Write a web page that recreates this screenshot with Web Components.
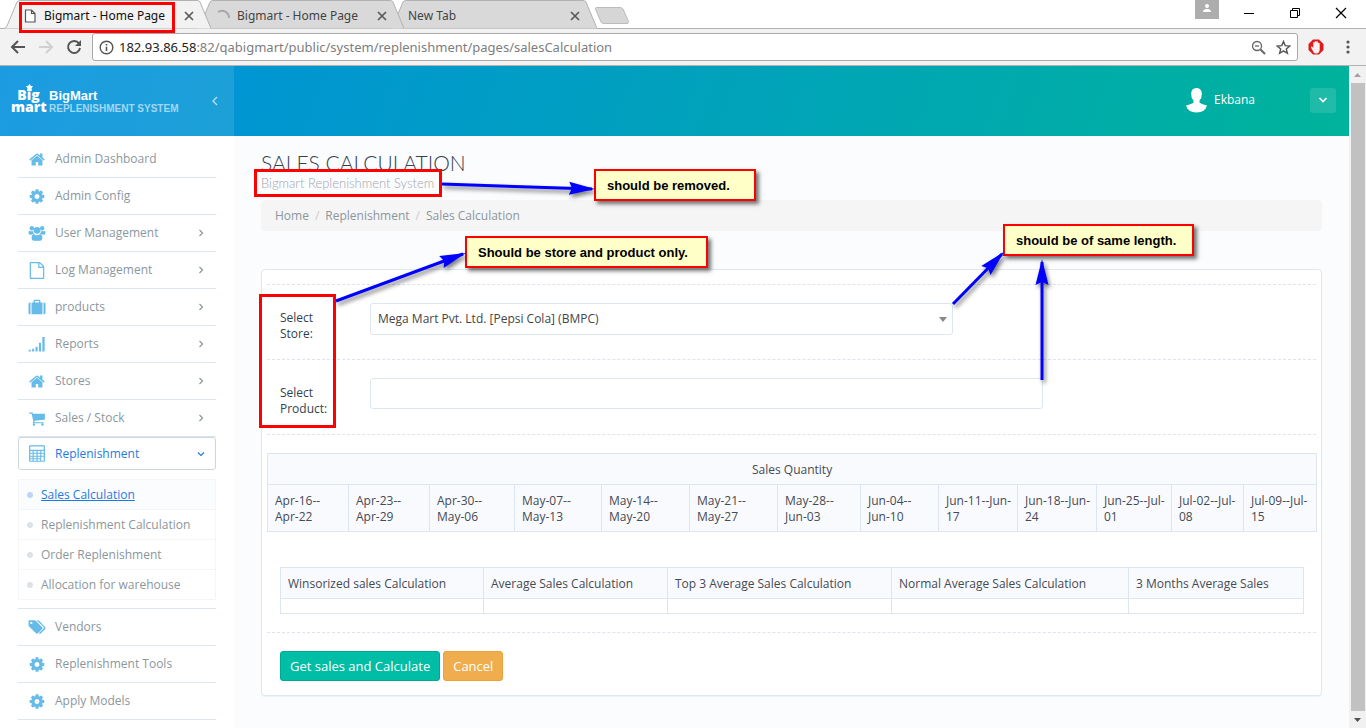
<!DOCTYPE html>
<html lang="en">
<head>
<meta charset="utf-8">
<title>Bigmart - Home Page</title>
<style>
  html, body { margin: 0; height: 100%; }
  body { font: 12px/16px "Open Sans", sans-serif; color: #333f4f; background: #fbfcfe; overflow: hidden; }
</style>
</head>
<body>
<app-window></app-window>
<script>
const ICONS = {
  home: '<path d="M1472 992v480q0 26-19 45t-45 19h-384v-384h-256v384h-384q-26 0-45-19t-19-45v-480q0-1 .5-3t.5-3l575-474 575 474q1 2 1 6zm223-69l-62 74q-8 9-21 11h-3q-13 0-21-7l-692-577-692 577q-12 8-24 7-13-2-21-11l-62-74q-8-10-7-23.5t11-21.5l719-599q32-26 76-26t76 26l244 204v-195q0-14 9-23t23-9h192q14 0 23 9t9 23v408l219 182q10 8 11 21.5t-7 23.5z"/>',
  cog: '<path d="M1152 896q0-106-75-181t-181-75-181 75-75 181 75 181 181 75 181-75 75-181zm512-109v222q0 12-8 23t-20 13l-185 28q-19 54-39 91 35 50 107 138 10 12 10 25t-9 23q-27 37-99 108t-94 71q-12 0-26-9l-138-108q-44 23-91 38-16 136-29 186-7 28-36 28h-222q-14 0-24.5-8.5t-11.5-21.5l-28-184q-49-16-90-37l-141 107q-10 9-25 9-14 0-25-11-126-114-165-168-7-10-7-23 0-12 8-23 15-21 51-66.5t54-70.5q-27-50-41-99l-183-27q-13-2-21-12.5t-8-23.5v-222q0-12 8-23t19-13l186-28q14-46 39-92-40-57-107-138-10-12-10-24 0-10 9-23 26-36 98.5-107.5t94.5-71.5q13 0 26 10l138 107q44-23 91-38 16-136 29-186 7-28 36-28h222q14 0 24.5 8.5t11.5 21.5l28 184q49 16 90 37l142-107q9-9 24-9 13 0 25 10 129 119 165 170 7 8 7 22 0 12-8 23-15 21-51 66.5t-54 70.5q26 50 41 98l183 28q13 2 21 12.5t8 23.5z"/>',
  users: '<circle cx="350" cy="340" r="230"/><circle cx="1442" cy="340" r="230"/><circle cx="896" cy="560" r="360"/><path d="M0 800q0-200 130-200 60 50 200 60 90 0 150-30 0 200 110 320h-110q-110 0-190 90h-150q-140-20-140-240zM1792 800q0-200-130-200-60 50-200 60-90 0-150-30 0 200-110 320h110q110 0 190 90h150q140-20 140-240zM330 1420q0-440 220-470 160 130 346 130t346-130q220 30 220 470 0 250-250 250h-632q-250 0-250-250z"/>',
  file: '<path d="M1596 380q28 28 48 76t20 88v1152q0 40-28 68t-68 28h-1344q-40 0-68-28t-28-68v-1600q0-40 28-68t68-28h896q40 0 88 20t76 48zm-444-244v376h376q-10-29-22-41l-313-313q-12-12-41-22zm384 1528v-1024h-416q-40 0-68-28t-28-68v-416h-768v1536h1280z"/>',
  suitcase: '<path d="M0 540q0-160 150-160h60v1240h-60q-150 0-150-160zM1792 540q0-160-150-160h-60v1240h60q150 0 150-160zM320 380h220v-190q0-110 110-110h492q110 0 110 110v190h220v1240h-1152zM680 380h432v-160h-432z"/>',
  signal: '<path d="M20 1450h220v190h-220zM380 1340h220v300h-220zM740 1120h220v520h-220zM1100 700h220v940h-220zM1460 100h240v1540h-240z"/>',
  cart: '<path d="M704 1536q0 52-38 90t-90 38-90-38-38-90 38-90 90-38 90 38 38 90zm896 0q0 52-38 90t-90 38-90-38-38-90 38-90 90-38 90 38 38 90zm128-1088v512q0 24-16.5 42.5t-40.5 21.5l-1044 122q13 60 13 70 0 16-24 64h920q26 0 45 19t19 45-19 45-45 19h-1024q-26 0-45-19t-19-45q0-11 8-31.5t16-36 21.5-40 15.5-29.5l-177-823h-204q-26 0-45-19t-19-45 19-45 45-19h256q16 0 28.5 6.5t19.5 15.5 13 24.5 8 26 5.5 29.5 4.5 26h1201q26 0 45 19t19 45z"/>',
  calculator: '<path fill-rule="evenodd" d="M60 100q0-80 80-80h1512q80 0 80 80v1592q0 80-80 80h-1512q-80 0-80-80zM190 150v350h1412v-350zM190 630v190h240v-190zM550 630v190h290v-190zM960 630v190h270v-190zM1350 630v190h252v-190zM190 930v200h240v-200zM550 930v200h290v-200zM960 930v200h270v-200zM190 1240v160h240v-160zM550 1240v160h290v-160zM960 1240v160h270v-160zM190 1510v140h240v-140zM550 1510v140h290v-140zM960 1510v140h270v-140zM1350 930v200h252v-200zM1350 1240v410h252v-410z"/>',
  tags: '<path fill-rule="evenodd" d="M0 240q0-110 110-110h500q100 0 190 90l640 640q90 100 0 200l-450 450q-100 90-200 0l-700-700q-90-90-90-190zM300 300a120 120 0 1 0 1 0z"/><path d="M860 130h110q100 0 190 90l600 640q80 100 0 200l-470 470q-90 80-180 0l-20-20 460-450q130-130 0-260z"/>'
};

const define = (name, html, setup) => {
  const template = document.createElement('template');
  template.innerHTML = html;
  customElements.define(name, class extends HTMLElement {
    constructor() {
      super();
      this.attachShadow({ mode: 'open' }).append(template.content.cloneNode(true));
    }
    connectedCallback() { if (setup) setup(this, this.shadowRoot); }
  });
};

/* ---------- browser frame ---------- */

define('browser-tab', `
<style>
  :host { position: relative; display: flex; align-items: center; box-sizing: border-box; flex: 0 0 207px; height: 29px; margin-right: -14px; padding: 2px 17px 0 20px; gap: 7px; font: 12px/16px "Noto Sans", sans-serif; color: #444; z-index: 1; }
  :host([active]) { z-index: 3; color: #111; }
  :host([behind]) { z-index: 0; padding-left: 18px; }
  .shape { position: absolute; inset: 0; width: 100%; height: 29px; z-index: -1; fill: #d9d9d9; stroke: #b2b2b2; }
  :host([active]) .shape { fill: #f2f2f2; }
  .title { flex: 1; white-space: nowrap; overflow: hidden; }
  button { display: flex; border: 0; padding: 0; background: none; }
</style>
<svg class="shape" viewBox="0 0 207 29" preserveAspectRatio="none" aria-hidden="true"><path d="M0 28.500Q2 28 3 26L13 2Q14 .5 16 .5H193Q195 .5 196 2L207 28.500"/></svg>
<slot name="icon"></slot>
<span class="title"><slot></slot></span>
<button aria-label="Close tab"><svg width="10" height="10" viewBox="0 0 10 10" stroke="#5a5a5a" stroke-width="1.700"><path d="M1 1L9 9M9 1L1 9"/></svg></button>`);

define('browser-tabs', `
<style>
  :host { display: flex; height: 29px; background: linear-gradient(#b2b2b2, #b2b2b2) 0 100% / 100% 1px no-repeat #fff; padding-left: 4px; isolation: isolate; }
  .new { border: 0; background: none; padding: 0; margin: 7px 0 0 11px; height: 18px; display: flex; }
  .spacer { flex: 1; }
  .user { width: 24px; height: 19px; background: #adadad; display: flex; justify-content: center; margin-right: 24px; }
  .ctl { border: 0; background: none; padding: 0; width: 12px; height: 26px; display: flex; align-items: center; margin-right: 34px; }
  .ctl:last-child { margin-right: 19px; }
</style>
<browser-tab active><svg slot="icon" width="13" height="14" viewBox="0 0 13 14" fill="#fff" stroke="#555" stroke-width="1.200"><path d="M1.500 1H7.500L11 4.500V13H1.500zM7.500 1V4.500H11"/></svg>Bigmart - Home Page</browser-tab>
<browser-tab><svg slot="icon" width="13" height="14" viewBox="0 0 13 14" fill="none" stroke="#a8a8a8" stroke-width="2"><path d="M1 3A7 7 0 0 1 12 9"/></svg>Bigmart - Home Page</browser-tab>
<browser-tab behind>New Tab</browser-tab>
<button class="new" aria-label="New tab"><svg width="36" height="18" viewBox="0 0 36 18" fill="#d6d6d6" stroke="#bcbcbc"><path d="M2.500.5H26Q28 .5 29 2L34.500 14.500Q35 16.500 33 16.500H10Q8 16.500 7 15L1.500 2Q1 .5 2.500.5z"/></svg></button>
<span class="spacer"></span>
<span class="user"><svg width="10" height="14" viewBox="0 0 10 14" fill="#fff"><circle cx="5" cy="6" r="2"/><path d="M1 12Q1 9 5 9T9 12z"/></svg></span>
<button class="ctl" aria-label="Minimize"><svg width="12" height="12" viewBox="0 0 12 12" stroke="#000"><path d="M1 6.500H11"/></svg></button>
<button class="ctl" aria-label="Restore"><svg width="12" height="12" viewBox="0 0 12 12" stroke="#000" fill="none"><path d="M1.500 3.500H8.500V10.500H1.500zM3.500 3.500V1.500H10.500V8.500H8.500"/></svg></button>
<button class="ctl" aria-label="Close"><svg width="12" height="12" viewBox="0 0 12 12" stroke="#000" stroke-width="1.200"><path d="M1 1L11 11M11 1L1 11"/></svg></button>`);

define('browser-toolbar', `
<style>
  :host { display: flex; align-items: center; height: 36px; background: #f2f2f2; border-bottom: 1px solid #b2b2b2; padding: 0 14px 0 10px; }
  button { border: 0; background: none; padding: 0; display: flex; }
  .nav { display: flex; gap: 12px; margin-right: 10px; }
  form { flex: 1; display: flex; align-items: center; box-sizing: border-box; height: 28px; margin: 0; border: 1px solid #a9a9a9; border-radius: 3px; background: #fff; padding: 0 6px; font: 13px/18px "Noto Sans", sans-serif; }
  label { color: #222; margin-left: 5px; }
  input { flex: 1; min-width: 0; border: 0; outline: 0; padding: 0; background: none; font: inherit; color: #7d7d7d; }
  .tail { display: flex; gap: 10px; }
  .ext { margin: 0 20px 0 10px; }
</style>
<div class="nav">
  <button aria-label="Back"><svg width="16" height="16" viewBox="0 0 16 16" fill="none" stroke="#555" stroke-width="2"><path d="M15 8H2M8 2L2 8L8 14"/></svg></button>
  <button aria-label="Forward"><svg width="16" height="16" viewBox="0 0 16 16" fill="none" stroke="#d0d0d0" stroke-width="2"><path d="M1 8H14M8 2L14 8L8 14"/></svg></button>
  <button aria-label="Reload"><svg width="16" height="16" viewBox="0 0 16 16" fill="none" stroke="#555" stroke-width="2"><path d="M13 4.500A6 6 0 1 0 14 9"/><path d="M15 1V7H9z" fill="#555" stroke="none"/></svg></button>
</div>
<form>
  <svg width="15" height="15" viewBox="0 0 15 15" fill="none" stroke="#555" stroke-width="1.400"><circle cx="7.500" cy="7.500" r="6.300"/><path d="M7.500 6.800V11M7.500 4V5.500" stroke-width="1.600"/></svg>
  <label for="url">182.93.86.58</label><input id="url" type="text" value=":82/qabigmart/public/system/replenishment/pages/salesCalculation">
  <span class="tail">
    <svg width="15" height="15" viewBox="0 0 15 15" fill="none" stroke="#666" stroke-width="1.300"><circle cx="6" cy="6" r="4.500"/><path d="M9.500 9.500L14 14" stroke-width="2"/><path d="M4 6H8"/></svg>
    <svg width="15" height="15" viewBox="0 0 15 15" fill="none" stroke="#555" stroke-width="1.400"><path d="M7.500 1.500L9.200 5.600L13.800 6L10.300 8.900L11.400 13.300L7.500 10.900L3.600 13.300L4.700 8.900L1.200 6L5.800 5.600z"/></svg>
  </span>
</form>
<button class="ext" aria-label="Ad blocker"><svg width="16" height="16" viewBox="0 0 16 16"><path d="M5 .5H11L15.500 5V11L11 15.500H5L.5 11V5z" fill="#dd1c1c"/><path d="M5.500 13L3 8.500Q3 7 4 7.500L5.300 9V3.500Q6 2.500 6.600 3.500L7 2.500Q7.600 1.500 8.200 2.500L8.600 2.600Q9.300 1.800 9.900 3L10 4Q11.200 3.200 11.700 4.500V11Q11 14.500 8.500 14.500T5.500 13z" fill="#f7f1f1"/></svg></button>
<button aria-label="Menu"><svg width="8" height="16" viewBox="0 0 8 16" fill="#555"><circle cx="4" cy="3" r="1.600"/><circle cx="4" cy="8" r="1.600"/><circle cx="4" cy="13" r="1.600"/></svg></button>`);

define('page-scrollbar', `
<style>
  :host { display: flex; flex-direction: column; align-items: center; flex: 0 0 17px; background: #f1f1f1; }
  .arrow { flex: 0 0 17px; }
  .thumb { flex: 1; align-self: stretch; margin: 0 1px 0 2px; background: #c1c1c1; }
</style>
<svg class="arrow" width="9" viewBox="0 0 9 17"><path d="M1 11L4.500 7L8 11z" fill="#a3a3a3"/></svg>
<div class="thumb"></div>
<svg class="arrow" width="9" viewBox="0 0 9 17"><path d="M1 7L4.500 11L8 7z" fill="#505050"/></svg>`);

/* ---------- site header and side menu ---------- */

define('site-header', `
<style>
  :host { display: flex; height: 70px; background: linear-gradient(110deg, #008fdf, #00b39b); color: #fff; }
  .brand { flex: 0 0 234px; box-sizing: border-box; display: flex; align-items: center; padding: 0 15px 0 11px; background: rgba(255,255,255,.11); }
  .logo { position: relative; width: 35px; font: 800 14px/12px "Open Sans", sans-serif; text-align: center; }
  .logo b { display: block; font-weight: 800; }
  .logo svg { position: absolute; left: 15px; top: -5px; }
  .names { flex: 1; font: bold 13px/13px "Liberation Sans", sans-serif; white-space: nowrap; margin-left: 3px; padding-top: 2px; }
  .names small { display: block; font-size: 10px; color: #a3d7f2; }
  button { border: 0; padding: 0; background: none; display: flex; align-items: center; justify-content: center; }
  .account { flex: 1; display: flex; align-items: center; justify-content: flex-end; padding: 0 13px 2px 0; }
  .account span { margin: 0 55px 0 6px; }
  .drop { width: 26px; height: 25px; border-radius: 3px; background: rgba(255,255,255,.12); }
</style>
<div class="brand">
  <div class="logo"><svg width="7" height="7" viewBox="0 0 7 7" fill="#fff" aria-hidden="true"><path d="M3.500 0L5 2H7L5.500 4.500L6 7H1L1.500 4.500L0 2H2z"/></svg><b>Big</b><b>mart</b></div>
  <div class="names">BigMart<small>REPLENISHMENT SYSTEM</small></div>
  <button aria-label="Collapse menu"><svg width="8" height="10" viewBox="0 0 8 10" fill="none" stroke="#b9e0f4" stroke-width="1.300"><path d="M6 1L2 5L6 9"/></svg></button>
</div>
<div class="account">
  <svg width="23" height="26" viewBox="0 0 23 26" fill="#fff"><path d="M11.500 1C15 1 17 3.500 16.800 7Q17 11 14.500 13.500V15.500Q16 17 22 18.500Q20 25.500 11.500 25.500T1 18.500Q7 17 8.500 15.500V13.500Q6 11 6.200 7Q6 1 11.500 1z"/></svg>
  <span>Ekbana</span>
  <button class="drop" aria-label="Account menu"><svg width="10" height="8" viewBox="0 0 10 8" fill="none" stroke="#fff" stroke-width="1.700"><path d="M1.500 2L5 5.500L8.500 2"/></svg></button>
</div>`);

define('menu-item', `
<style>
  :host { display: block; border-bottom: 1px solid #dde6f0; }
  a { display: flex; align-items: center; height: 36px; padding: 0 11px 0 10px; color: #8b979d; text-decoration: none; }
  .icon { width: 18px; height: 17px; fill: #66bbe8; margin-right: 9px; }
  span { flex: 1; }
  .chev { display: none; fill: none; stroke: #8b979d; stroke-width: 1.2; }
  :host([more]) .chev { display: block; }
  :host([open]) { border: 0; }
  :host([open]) a { box-sizing: border-box; height: 33px; padding: 0 10px 0 9px; border: 1px solid #cfd6db; border-radius: 3px; color: #1f7ae0; }
  :host([open]) .chev { display: block; stroke: #1f7ae0; transform: rotate(90deg); }
</style>
<a href="#"><svg class="icon" viewBox="0 0 1792 1792" aria-hidden="true"></svg><span><slot></slot></span><svg class="chev" width="8" height="8" viewBox="0 0 8 8"><path d="M2.500 1L5.500 4L2.500 7"/></svg></a>`,
(el, root) => { root.querySelector('.icon').innerHTML = ICONS[el.getAttribute('icon')]; });

define('sub-item', `
<style>
  :host { display: block; border-bottom: 1px solid #f3f5f7; background: #fff; }
  a { display: flex; align-items: center; height: 29px; padding-left: 8px; gap: 8px; color: #8b979d; text-decoration: none; }
  a::before { content: ""; width: 6px; height: 6px; border-radius: 50%; background: #dde2e6; }
  :host([current]) { background: #fbfcfe; }
  :host([current]) a { color: #1f7ae0; text-decoration: underline; }
  :host([current]) a::before { background: #b8d7f6; }
</style>
<a href="#"><span><slot></slot></span></a>`);

define('side-menu', `
<style>
  :host { display: block; box-sizing: border-box; flex: 0 0 234px; background: #fff; padding: 5px 18px 0; }
  .sub { margin-top: 9px; border: 1px solid #f3f5f7; border-bottom: 0; border-radius: 2px; }
  .end { margin: 8px 0 0; border: 0; border-top: 1px solid #dde6f0; }
</style>
<nav>
  <menu-item icon="home">Admin Dashboard</menu-item>
  <menu-item icon="cog">Admin Config</menu-item>
  <menu-item icon="users" more>User Management</menu-item>
  <menu-item icon="file" more>Log Management</menu-item>
  <menu-item icon="suitcase" more>products</menu-item>
  <menu-item icon="signal" more>Reports</menu-item>
  <menu-item icon="home" more>Stores</menu-item>
  <menu-item icon="cart" more>Sales / Stock</menu-item>
  <menu-item icon="calculator" open>Replenishment</menu-item>
  <div class="sub">
    <sub-item current>Sales Calculation</sub-item>
    <sub-item>Replenishment Calculation</sub-item>
    <sub-item>Order Replenishment</sub-item>
    <sub-item>Allocation for warehouse</sub-item>
  </div>
  <hr class="end">
  <menu-item icon="tags">Vendors</menu-item>
  <menu-item icon="cog">Replenishment Tools</menu-item>
  <menu-item icon="cog">Apply Models</menu-item>
</nav>`);

/* ---------- page content ---------- */

define('page-heading', `
<style>
  :host { display: block; padding-top: 15px; }
  h1 { margin: 0; font: 300 21px/24px Lato, sans-serif; color: #333f4f; text-transform: uppercase; }
  p { margin: 0; font: 300 13px/16px Lato, sans-serif; color: #a3a5ae; }
  nav { display: flex; align-items: center; margin-top: 9px; height: 31px; border-radius: 4px; background: #f5f5f5; padding: 0 14px; }
  a, span { color: #8b979d; text-decoration: none; }
  i { font-style: normal; color: #ccc; margin: 0 6px; }
</style>
<h1>Sales Calculation</h1>
<p>Bigmart Replenishment System</p>
<nav aria-label="Breadcrumb"><a href="#">Home</a><i>/</i><a href="#">Replenishment</a><i>/</i><span>Sales Calculation</span></nav>`);

define('sales-form', `
<style>
  :host { display: block; margin-top: 38px; border: 1px solid #dfe7f0; border-radius: 4px; background: #fff; box-shadow: 0 1px 1px rgba(0,0,0,.05); padding: 14px 5px; }
  form { margin: 0; }
  .row { border-top: 1px dashed #dfe3ee; padding: 18px 13px; }
  .field { display: grid; align-items: start; height: 38px; }
  .store { grid-template-columns: 90px 583fr 350fr; }
  .product { grid-template-columns: 90px 673fr 260fr; }
  label { font-weight: 500; padding: 7px 40px 0 0; }
  select, input { box-sizing: border-box; width: 100%; border: 1px solid #dde6f0; border-radius: 3px; background: #fff; font: inherit; color: #444; outline: 0; }
  select { height: 32px; padding: 0 7px; appearance: none; background: url("data:image/svg+xml,%3Csvg xmlns='http://www.w3.org/2000/svg' width='8' height='5'%3E%3Cpath d='M0 0H8L4 5z' fill='%23888'/%3E%3C/svg%3E") right 5px center no-repeat #fff; }
  input { height: 31px; padding: 0 7px; }
  .tables { padding: 18px 0; }
  table { width: 100%; border-collapse: collapse; table-layout: fixed; }
  th, td { border: 1px solid #dde6f0; padding: 8px 7px 6px; text-align: left; vertical-align: top; white-space: nowrap; }
  th { background: #f9fafe; font-weight: 500; color: #444a52; }
  .title { text-align: center; }
  .averages { margin: 35px 13px 0; }
  .actions { display: flex; gap: 3px; padding-bottom: 0; }
  button { height: 30px; border: 1px solid #00a793; border-radius: 3px; background: #00bda5; color: #fff; font: 13px/18px "Open Sans", sans-serif; padding: 0 9px; }
  .cancel { background: #f0ad4e; border-color: #eea236; }
</style>
<form>
  <div class="row"><div class="field store"><label for="store">Select Store:</label><select id="store"><option>Mega Mart Pvt. Ltd. [Pepsi Cola] (BMPC)</option></select></div></div>
  <div class="row"><div class="field product"><label for="product">Select Product:</label><input id="product" type="text"></div></div>
  <div class="row tables">
    <table>
      <colgroup><col style="width:81px"><col style="width:81px"><col style="width:85px"><col style="width:87px"><col style="width:88px"><col style="width:88px"><col style="width:83px"><col style="width:78px"><col style="width:79px"><col style="width:79px"><col style="width:75px"><col style="width:72px"><col style="width:73px"></colgroup>
      <thead>
        <tr><th class="title" colspan="13">Sales Quantity</th></tr>
        <tr><th>Apr-16--<br>Apr-22</th><th>Apr-23--<br>Apr-29</th><th>Apr-30--<br>May-06</th><th>May-07--<br>May-13</th><th>May-14--<br>May-20</th><th>May-21--<br>May-27</th><th>May-28--<br>Jun-03</th><th>Jun-04--<br>Jun-10</th><th>Jun-11--Jun-<br>17</th><th>Jun-18--Jun-<br>24</th><th>Jun-25--Jul-<br>01</th><th>Jul-02--Jul-<br>08</th><th>Jul-09--Jul-<br>15</th></tr>
      </thead>
    </table>
    <div class="averages">
      <table>
        <colgroup><col style="width:203px"><col style="width:184px"><col style="width:224px"><col style="width:237px"><col style="width:175px"></colgroup>
        <thead><tr><th>Winsorized sales Calculation</th><th>Average Sales Calculation</th><th>Top 3 Average Sales Calculation</th><th>Normal Average Sales Calculation</th><th>3 Months Average Sales</th></tr></thead>
        <tbody><tr><td></td><td></td><td></td><td></td><td></td></tr></tbody>
      </table>
    </div>
  </div>
  <div class="row actions"><button type="button">Get sales and Calculate</button><button type="button" class="cancel">Cancel</button></div>
</form>`);

/* ---------- review marks drawn over the page ---------- */

define('review-note', `
<style>
  :host { position: absolute; box-sizing: border-box; height: 32px; border: 2px solid #f00; background: #ffffc8; box-shadow: 3px 3px 4px rgba(0,0,0,.55); padding: 7px 11px; font: bold 13px/16px "Liberation Sans", sans-serif; color: #000; white-space: nowrap; }
</style><slot></slot>`);

define('review-marks', `
<style>
  :host { position: absolute; inset: 0; z-index: 10; pointer-events: none; }
  svg { position: absolute; left: 0; top: 0; overflow: visible; filter: drop-shadow(2px 3px 2px rgba(0,0,0,.5)); }
  .box { position: absolute; box-sizing: border-box; border: 3px solid #f00; }
</style>
<div class="box" style="left:19px;top:2px;width:156px;height:31px"></div>
<div class="box" style="left:254px;top:169px;width:188px;height:28px"></div>
<div class="box" style="left:259px;top:294px;width:77px;height:134px"></div>
<review-note style="left:594px;top:169px;width:162px">should be removed.</review-note>
<review-note style="left:465px;top:236px;width:243px">Should be store and product only.</review-note>
<review-note style="left:1003px;top:224px;width:191px">should be of same length.</review-note>
<svg width="1" height="1" fill="#00f" stroke="#00f">
  <defs><marker id="head" markerUnits="userSpaceOnUse" markerWidth="28" markerHeight="16" refX="23" refY="7" orient="auto"><path d="M0 .5L26 7L0 13.500L3 7z" stroke="none"/></marker></defs>
  <g stroke-width="3">
    <path d="M442 184L592 189" marker-end="url(#head)"/><path d="M336 301L463 254" marker-end="url(#head)"/><path d="M953 304L1002 254" marker-end="url(#head)"/><path d="M1042 380V262" marker-end="url(#head)"/>
  </g>
</svg>`);

define('app-window', `
<style>
  :host { position: relative; display: flex; flex-direction: column; height: 100vh; overflow: hidden; }
  .view { flex: 1; min-height: 0; display: flex; }
  .site { flex: 1; min-width: 0; overflow: hidden; display: flex; flex-direction: column; }
  .body { flex: 1; display: flex; }
  main { flex: 1; min-width: 0; background: #fbfcfe; padding: 0 27px; }
</style>
<browser-tabs></browser-tabs>
<browser-toolbar></browser-toolbar>
<div class="view">
  <div class="site">
    <site-header></site-header>
    <div class="body">
      <side-menu></side-menu>
      <main><page-heading></page-heading><sales-form></sales-form></main>
    </div>
  </div>
  <page-scrollbar></page-scrollbar>
</div>
<review-marks></review-marks>`);
</script>
</body>
</html>
